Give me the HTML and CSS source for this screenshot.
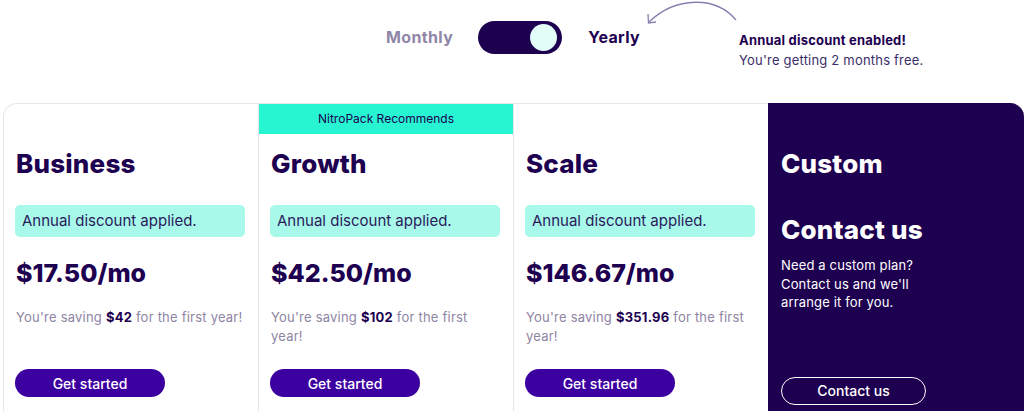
FILE: index.html
```html
<!DOCTYPE html>
<html>
<head>
<meta charset="utf-8">
<link rel="stylesheet" href="styles.css">
</head>
<body>
<header class="billing">
  <span class="period period-off">Monthly</span>
  <span class="toggle"><span class="knob"></span></span>
  <span class="period period-on">Yearly</span>
  <div class="note">
    <svg class="arrow" width="100" height="30" viewBox="0 0 100 30">
      <path d="M92 21 C72 -3 32 -3 5 23" fill="none" stroke="#8a7fb0" stroke-width="1.3"/>
      <path d="M4 15 L4.5 24 L12 23" fill="none" stroke="#8a7fb0" stroke-width="1.3"/>
    </svg>
    <strong class="note-title">Annual discount enabled!</strong>
    <span class="note-text">You're getting 2 months free.</span>
  </div>
</header>
<main class="plans">
  <section class="card card-first">
    <h2 class="plan-name">Business</h2>
    <div class="discount">Annual discount applied.</div>
    <div class="price">$17.50/mo</div>
    <p class="saving">You're saving <b>$42</b> for the first year!</p>
    <button class="btn">Get started</button>
  </section>
  <section class="card card-rec">
    <div class="badge">NitroPack Recommends</div>
    <h2 class="plan-name">Growth</h2>
    <div class="discount">Annual discount applied.</div>
    <div class="price">$42.50/mo</div>
    <p class="saving">You're saving <b>$102</b> for the first year!</p>
    <button class="btn">Get started</button>
  </section>
  <section class="card">
    <h2 class="plan-name">Scale</h2>
    <div class="discount">Annual discount applied.</div>
    <div class="price">$146.67/mo</div>
    <p class="saving">You're saving <b>$351.96</b> for the first year!</p>
    <button class="btn">Get started</button>
  </section>
  <section class="card card-custom">
    <h2 class="plan-name">Custom</h2>
    <div class="contact-title">Contact us</div>
    <p class="custom-text">Need a custom plan? Contact us and we'll arrange it for you.</p>
    <button class="btn btn-outline">Contact us</button>
  </section>
</main>
</body>
</html>
```

FILE: styles.css
```css
* { box-sizing: border-box; }
html, body { margin: 0; padding: 0; }
body {
  width: 1024px;
  height: 411px;
  overflow: hidden;
  background: #fff;
  font-family: Inter, "Noto Sans", sans-serif;
  color: #1e0050;
}
.billing {
  height: 103px;
  display: flex;
  align-items: flex-start;
  padding-left: 386px;
  padding-top: 21px;
}
.period {
  font-size: 16px;
  font-weight: 700;
  line-height: 33px;
  letter-spacing: 0.35px;
}
.period-off { color: #8f86a8; }
.period-on { color: #1e0050; margin-left: 26px; }
.toggle {
  width: 84px;
  height: 33px;
  border-radius: 17px;
  background: #1e0050;
  margin-left: 25px;
  display: flex;
  align-items: center;
  justify-content: flex-end;
  padding-right: 5px;
}
.knob {
  width: 27px;
  height: 27px;
  border-radius: 50%;
  background: #e2fdf8;
}
.note {
  position: relative;
  margin-left: 99px;
  margin-top: 9px;
  display: flex;
  flex-direction: column;
  font-size: 13px;
  line-height: 20px;
  letter-spacing: 0.2px;
}
.arrow {
  position: absolute;
  left: -95px;
  top: -31px;
}
.note-title { font-weight: 700; color: #1e0050; }
.note-text { color: #3a2d6a; }

.plans {
  display: flex;
  padding-left: 3px;
}
.card {
  position: relative;
  width: 255px;
  height: 320px;
  border: 1px solid #e6e6ea;
  border-right: none;
  padding: 40px 12px 0 12px;
  display: flex;
  flex-direction: column;
  align-items: flex-start;
}
.card-first { border-top-left-radius: 14px; }
.card-custom {
  width: 256px;
  background: #1e0050;
  border-color: #1e0050;
  border-top-right-radius: 14px;
  color: #fff;
}
.badge {
  position: absolute;
  left: 0;
  right: 0;
  top: 0;
  height: 30px;
  background: #27f5d2;
  font-size: 12px;
  line-height: 30px;
  text-align: center;
  color: #1e0050;
}
.plan-name {
  margin: 0;
  font-size: 26px;
  font-weight: 800;
  line-height: 40px;
  letter-spacing: 0.2px;
}
.discount {
  margin-top: 21px;
  margin-left: -1px;
  width: 230px;
  height: 32px;
  border-radius: 5px;
  background: #a8f9e9;
  font-size: 15px;
  line-height: 32px;
  padding-left: 7px;
  color: #2a1a5c;
}
.price {
  margin-top: 20px;
  font-size: 25px;
  font-weight: 800;
  line-height: 32px;
}
.saving {
  margin: 19px 0 0 0;
  font-size: 13px;
  line-height: 19px;
  letter-spacing: 0.22px;
  color: #8e84a3;
  width: 229px;
  height: 61px;
}
.saving b { color: #1e0050; font-weight: 700; }
.btn {
  margin-top: 0;
  margin-left: -1px;
  width: 150px;
  height: 28px;
  border: none;
  border-radius: 14px;
  background: #3d00a0;
  color: #fff;
  font-family: inherit;
  font-size: 14px;
  font-weight: 500;
  padding: 0;
}
.contact-title {
  margin-top: 26px;
  font-size: 26px;
  font-weight: 800;
  line-height: 40px;
  letter-spacing: 0.2px;
}
.custom-text {
  margin: 6px 0 0 0;
  width: 175px;
  font-size: 13px;
  line-height: 18.5px;
  letter-spacing: 0.15px;
  color: #fff;
}
.btn-outline {
  margin-top: 65px;
  margin-left: 0;
  width: 145px;
  background: transparent;
  border: 1px solid #fff;
}
```
